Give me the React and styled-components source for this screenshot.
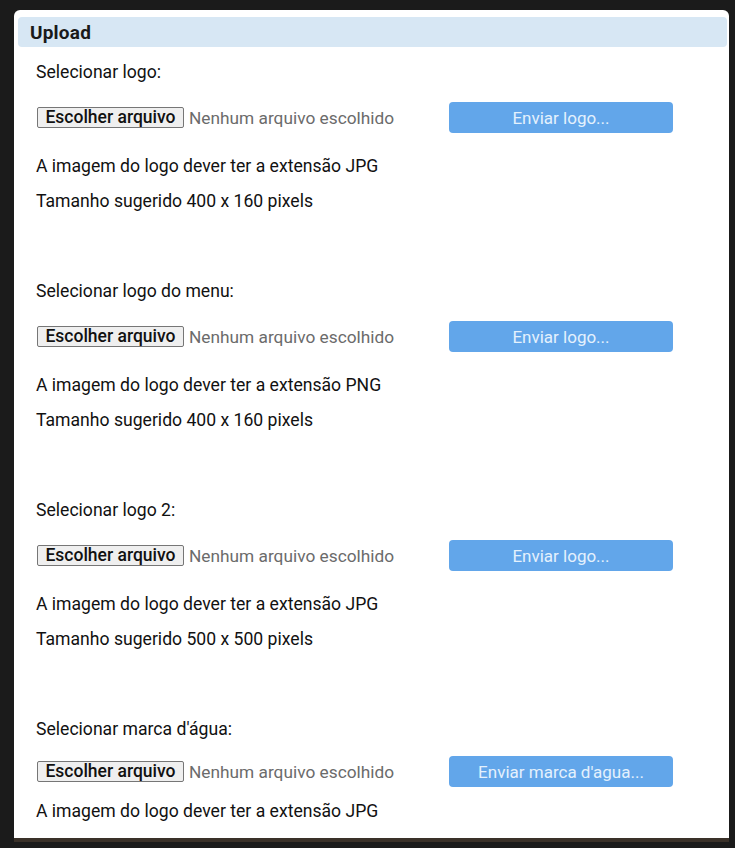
import React from "react";
import styled, { createGlobalStyle } from "styled-components";

const GlobalStyle = createGlobalStyle`
  html, body {
    margin: 0;
    background: #1b1b1b;
    font-family: "Roboto", "Liberation Sans", Arial, sans-serif;
  }
`;

const uploads = [
  {
    label: "Selecionar logo:",
    button: "Enviar logo...",
    notes: ["A imagem do logo dever ter a extensão JPG", "Tamanho sugerido 400 x 160 pixels"],
  },
  {
    label: "Selecionar logo do menu:",
    button: "Enviar logo...",
    notes: ["A imagem do logo dever ter a extensão PNG", "Tamanho sugerido 400 x 160 pixels"],
  },
  {
    label: "Selecionar logo 2:",
    button: "Enviar logo...",
    notes: ["A imagem do logo dever ter a extensão JPG", "Tamanho sugerido 500 x 500 pixels"],
  },
  {
    label: "Selecionar marca d'água:",
    button: "Enviar marca d'agua...",
    notes: ["A imagem do logo dever ter a extensão JPG"],
    compact: true,
  },
];

function App() {
  return (
    <Page>
      <GlobalStyle />
      <Panel>
        <Header>Upload</Header>
        <Body>
          {uploads.map((item) => (
            <Section key={item.label} $compact={item.compact}>
              <Label>{item.label}</Label>
              <Row $compact={item.compact}>
                <FileField>
                  <FileButton type="button">Escolher arquivo</FileButton>
                  <FileName>Nenhum arquivo escolhido</FileName>
                </FileField>
                <SendButton type="button">{item.button}</SendButton>
              </Row>
              <Notes $compact={item.compact}>
                {item.notes.map((n) => (
                  <Note key={n}>{n}</Note>
                ))}
              </Notes>
            </Section>
          ))}
        </Body>
      </Panel>
    </Page>
  );
}

const Page = styled.div`
  width: 735px;
  height: 848px;
  padding: 10px 6px 0 14px;
  box-sizing: border-box;
  background: #1b1b1b;
  overflow: hidden;
`;

const Panel = styled.div`
  height: 832px;
  background: #fff;
  border-radius: 6px 6px 0 0;
  padding: 7px 2px 0 4px;
  box-sizing: border-box;
  border-bottom: 4px solid #3a3129;
  overflow: hidden;
`;

const Header = styled.div`
  height: 30px;
  background: #d7e7f4;
  border-radius: 4px;
  padding-left: 12px;
  display: flex;
  align-items: center;
  font-size: 19px;
  font-weight: 700;
  color: #1a1a1a;
  letter-spacing: 0.2px;
`;

const Body = styled.div`
  padding: 15px 0 0 18px;
`;

const Section = styled.div`
  display: flex;
  flex-direction: column;
  margin-bottom: ${(p) => (p.$compact ? "0" : "70px")};
`;

const Label = styled.div`
  font-size: 17.6px;
  line-height: 20px;
  color: #111;
`;

const Row = styled.div`
  display: grid;
  grid-template-columns: 413px 224px;
  align-items: center;
  margin-top: ${(p) => (p.$compact ? "17px" : "20px")};
  height: 31px;
`;

const FileField = styled.div`
  display: flex;
  align-items: center;
  gap: 5px;
  padding-left: 1px;
`;

const FileButton = styled.button`
  height: 21px;
  width: 147px;
  padding: 0;
  border: 1px solid #767676;
  border-radius: 2px;
  background: #efefef;
  font-family: inherit;
  font-size: 17.5px;
  font-weight: 500;
  line-height: 19px;
  color: #111;
  white-space: nowrap;
`;

const FileName = styled.span`
  font-size: 17.3px;
  color: #6b6b6b;
  white-space: nowrap;
`;

const SendButton = styled.button`
  height: 31px;
  border: none;
  border-radius: 4px;
  background: #62a6ea;
  color: #e4f1fd;
  font-family: inherit;
  font-size: 17px;
  padding: 0;
`;

const Notes = styled.div`
  display: flex;
  flex-direction: column;
  gap: 15px;
  margin-top: ${(p) => (p.$compact ? "14px" : "23px")};
`;

const Note = styled.div`
  font-size: 17.6px;
  line-height: 20px;
  color: #111;
`;

export default App;
